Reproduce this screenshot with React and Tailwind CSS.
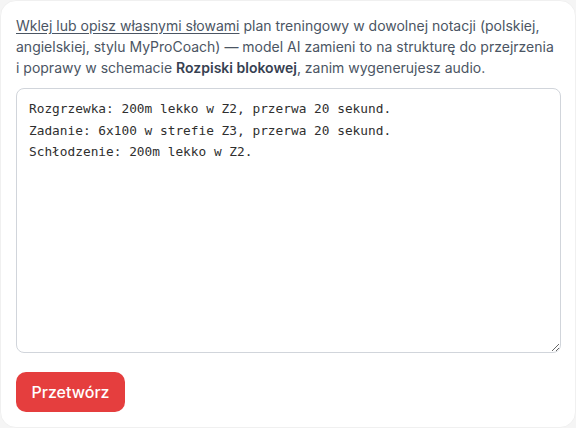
import React, { useState } from "react";

const plan = `Rozgrzewka: 200m lekko w Z2, przerwa 20 sekund.
Zadanie: 6x100 w strefie Z3, przerwa 20 sekund.
Schłodzenie: 200m lekko w Z2.`;

export default function App() {
    const [text, setText] = useState(plan);

    return (
        <div className="w-[576px] h-[428px] bg-[#f5f5f5]">
            <div
                className="w-full h-full bg-white rounded-2xl border border-[#f0f0f0] px-[15px] pt-[14px]"
                style={{ fontFamily: "Inter, 'Noto Sans', sans-serif" }}
            >
                {/* intro */}
                <p className="text-[14px] leading-[21px] text-[#4b5563] w-[540px]">
                    <span className="underline underline-offset-2">Wklej lub opisz własnymi słowami</span> plan treningowy w dowolnej notacji (polskiej, angielskiej, stylu MyProCoach) — model AI zamieni to na strukturę do przejrzenia i poprawy w schemacie <strong className="font-semibold text-[#374151]">Rozpiski blokowej</strong>, zanim wygenerujesz audio.
                </p>

                {/* plan input */}
                <textarea
                    className="mt-[10px] block w-[545px] h-[265px] rounded-lg border border-[#d1d5db] bg-white px-3 py-[9px] text-[12.8px] leading-[21.5px] text-[#2f2f2f] outline-none"
                    style={{ fontFamily: "'DejaVu Sans Mono', monospace" }}
                    value={text}
                    onChange={(e) => setText(e.target.value)}
                />

                <button
                    type="button"
                    className="mt-[19px] h-[40px] w-[109px] rounded-[10px] bg-[#e53e3e] text-white text-[16px] font-medium"
                >
                    Przetwórz
                </button>
            </div>
        </div>
    );
}
